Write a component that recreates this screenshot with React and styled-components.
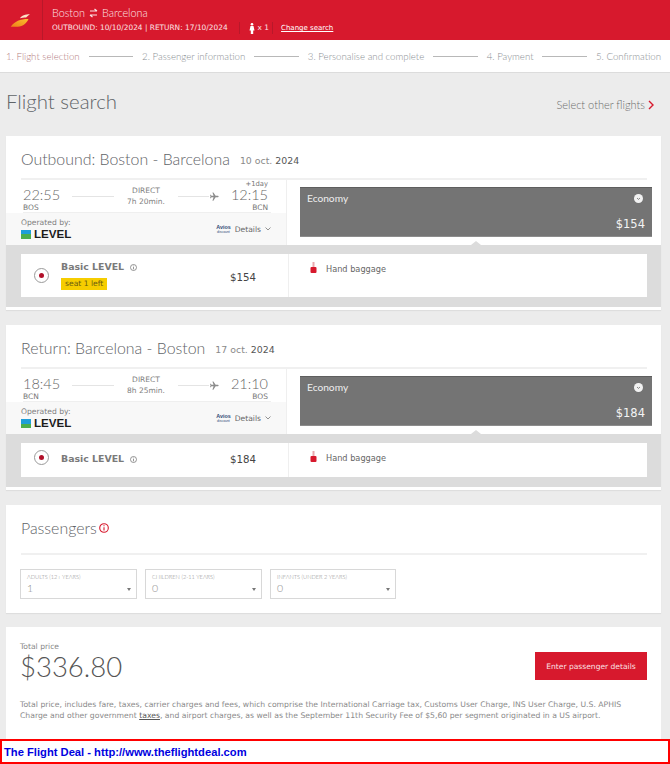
import React from "react";
import styled, { createGlobalStyle } from "styled-components";

const Global = createGlobalStyle`
  html, body { margin: 0; padding: 0; background: #ececec; }
  body { font-family: "DejaVu Sans", sans-serif; color: #555; height: 764px; overflow: hidden; }
  * { box-sizing: border-box; }
`;

const Page = styled.div`
  width: 670px;
  height: 764px;
  display: flex;
  flex-direction: column;
  overflow: hidden;
  position: relative;
`;

const Header = styled.header`
  height: 40px;
  flex: none;
  background: #d7192d;
  display: flex;
  color: #fbe3e5;
`;
const LogoCell = styled.div`
  width: 43px;
  border-right: 1px solid #b9182a;
  display: flex;
  align-items: center;
  padding-left: 10px;
`;
const Trip = styled.div`
  padding: 6px 0 0 9px;
  display: flex;
  flex-direction: column;
  gap: 2px;
`;
const Route = styled.div`
  font: 300 10.8px/14px Lato, sans-serif;
  display: flex;
  align-items: center;
  gap: 4px;
`;
const TripMeta = styled.div`
  font-size: 7.4px;
  line-height: 12px;
  display: flex;
  align-items: center;
  white-space: nowrap;
`;
const MetaCell = styled.span`
  display: inline-flex;
  align-items: center;
  gap: 3px;
  height: 12px;
  margin-left: ${(p) => p.$ml}px;
  padding-left: ${(p) => p.$pl}px;
  border-left: 1px solid #b9182a;
`;
const ChangeLink = styled.a`
  color: #fff;
  font-size: 7px;
  text-decoration: underline;
`;

const Stepper = styled.nav`
  height: 33px;
  flex: none;
  background: #fff;
  border-bottom: 1px solid #dcdcdc;
  display: flex;
  align-items: center;
  padding: 0 9px 0 6px;
  gap: 9px;
  font: 300 9.7px Lato, sans-serif;
  color: #8b8f94;
  white-space: nowrap;
`;
const Step = styled.span`
  color: ${(p) => (p.$active ? "#b5807f" : "#8b8f94")};
`;
const StepLine = styled.span`
  flex: 1;
  height: 1px;
  background: #b8b8b8;
`;

const Content = styled.main`
  flex: 1;
  min-height: 0;
  padding: 0 9px 0 6px;
  display: flex;
  flex-direction: column;
`;
const TitleRow = styled.div`
  height: 63px;
  flex: none;
  display: flex;
  justify-content: space-between;
  align-items: center;
  padding-bottom: 8px;
`;
const PageTitle = styled.h1`
  margin: 0;
  font: 300 20.4px Lato, sans-serif;
  color: #5f6468;
`;
const OtherFlights = styled.a`
  font: 300 11px Lato, sans-serif;
  color: #6d6d6d;
  display: flex;
  align-items: center;
  gap: 3px;
  margin-top: 8px;
  margin-right: 7px;
`;
const Card = styled.section`
  background: #fff;
  flex: none;
  margin-bottom: ${(p) => p.$mb || 15}px;
  padding-bottom: ${(p) => p.$pb || 0}px;
  box-shadow: 0 1px 1px rgba(0, 0, 0, 0.06);
`;
const CardHead = styled.div`
  margin: 0 14px 0 15px;
  height: ${(p) => p.$h || 44}px;
  border-bottom: 2px solid #f0f0f0;
  display: flex;
  align-items: center;
  gap: 10px;
  padding: ${(p) => p.$pad || "3px 0 0"};
`;
const CardTitle = styled.h2`
  margin: 0;
  font: 300 15.9px Lato, sans-serif;
  color: #5f6468;
  white-space: nowrap;
`;
const DateText = styled.span`
  font-size: 9.4px;
  color: #8a8a8a;
  margin-top: 3px;
  b { font-weight: 400; color: #555; }
`;
const FlightBody = styled.div`
  display: grid;
  grid-template-columns: 281px 1fr;
  height: 65px;
`;
const FlightInfo = styled.div`
  border-right: 1px solid #efefef;
  display: flex;
  flex-direction: column;
`;
const Times = styled.div`
  height: 33px;
  margin: 0 15px 0 17px;
  padding-right: 3px;
  display: grid;
  grid-template-columns: 49px 42px 64px 41px 1fr;
  align-items: center;
  border-bottom: 1px solid #efefef;
`;
const TimeBlock = styled.div`
  text-align: ${(p) => (p.$right ? "right" : "left")};
  position: relative;
  font: 300 14.5px/14px Lato, sans-serif;
  color: #666;
  margin-top: 6px;
  small {
    display: block;
    margin-top: 2px;
    font: 400 7.5px/7px "DejaVu Sans", sans-serif;
    color: #777;
  }
`;
const PlusDay = styled.span`
  position: absolute;
  right: 0;
  top: -8px;
  font: 400 6.800px/8px "DejaVu Sans", sans-serif;
  color: #777;
`;
const Rule = styled.span`
  height: 1px;
  background: #e4e4e4;
`;
const TailRule = styled(Rule)`
  flex: 1;
`;
const Direct = styled.div`
  text-align: center;
  font-size: 7.5px;
  line-height: 11px;
  color: #808080;
  white-space: nowrap;
`;
const PlaneSlot = styled.div`
  display: flex;
  align-items: center;
  gap: 1px;
`;
const Operated = styled.div`
  flex: 1;
  background: #f8f8f8;
  display: flex;
  justify-content: space-between;
  padding: 5px 15px 0 15px;
`;
const OpLabel = styled.div`
  font-size: 7.6px;
  line-height: 9px;
  color: #808080;
`;
const LevelMark = styled.div`
  display: flex;
  align-items: center;
  gap: 3px;
  margin-top: 1px;
  font: 700 11.600px/12px "Liberation Sans", sans-serif;
  color: #1c1c1c;
`;
const LevelIcon = styled.span`
  width: 10px;
  height: 9px;
  background: linear-gradient(#1e9ed8 50%, #4cae4c 50%);
`;
const DetailsWrap = styled.div`
  display: flex;
  align-items: center;
  gap: 4px;
  font-size: 7.6px;
  color: #666;
  margin-top: 4px;
  height: 14px;
`;
const Avios = styled.span`
  font: 700 5.400px/5px "Liberation Sans", sans-serif;
  color: #2f4a75;
  text-align: center;
  small { display: block; font-size: 3.4px; line-height: 4px; font-weight: 400; }
`;
const FareSide = styled.div`
  padding: 7px 9px 0 13px;
  position: relative;
`;
const FareBox = styled.div`
  height: 50px;
  background: #747474;
  border-top: 1px solid #5e5e5e;
  border-bottom: 1px solid #8c8c8c;
  color: #fff;
  padding: 4px 7px 5px;
  display: flex;
  flex-direction: column;
  justify-content: space-between;
`;
const FareTop = styled.div`
  display: flex;
  justify-content: space-between;
  align-items: center;
  padding-right: 2px;
  font: 400 10.2px Lato, sans-serif;
  color: #eee;
`;
const FarePrice = styled.div`
  text-align: right;
  font-size: 11.500px;
  line-height: 13px;
  color: #f3f3f3;
`;
const Notch = styled.span`
  position: absolute;
  left: 184px;
  bottom: 0;
  width: 0;
  height: 0;
  border: 5px solid transparent;
  border-top: 0;
  border-bottom: 4px solid #dcdcdc;
`;
const OptionsPanel = styled.div`
  background: #dcdcdc;
  padding: 9px 14px 10px 15px;
`;
const OptionRow = styled.div`
  background: #fff;
  display: grid;
  grid-template-columns: 268px 1fr;
  height: ${(p) => p.$h}px;
`;
const OptionLeft = styled.div`
  border-right: 1px solid #efefef;
  position: relative;
  display: flex;
  padding: ${(p) => (p.$compact ? "7px 0 0 13px" : "9px 0 0 13px")};
`;
const Radio = styled.span`
  width: 15px;
  height: 15px;
  flex: none;
  border: 1px solid #9a9a9a;
  border-radius: 50%;
  display: flex;
  align-items: center;
  justify-content: center;
  margin-top: ${(p) => (p.$compact ? "0" : "5px")};
  &::after {
    content: "";
    width: 5px;
    height: 5px;
    border-radius: 50%;
    background: #b1102a;
  }
`;
const OptionName = styled.div`
  margin-left: 12px;
  margin-top: ${(p) => (p.$compact ? "3px" : "-2px")};
  display: flex;
  flex-direction: column;
  align-items: flex-start;
  gap: 5px;
`;
const OptionTitle = styled.div`
  font-size: 9.4px;
  font-weight: 700;
  line-height: 12px;
  color: #7a7a7a;
  display: flex;
  align-items: center;
  gap: 6px;
`;
const SeatTag = styled.span`
  background: #f6cd00;
  color: #6b5b10;
  font-size: 7.6px;
  line-height: 12px;
  padding: 0 4px;
`;
const OptionPrice = styled.span`
  position: absolute;
  left: 209px;
  top: ${(p) => p.$top}px;
  font-size: 10.2px;
  line-height: 12px;
  color: #444;
`;
const Baggage = styled.div`
  display: flex;
  align-items: flex-start;
  gap: 9px;
  padding: 8px 0 0 21px;
  font-size: 8.2px;
  line-height: 14px;
  color: #666;
`;
const Selects = styled.div`
  display: flex;
  gap: 8px;
  padding: 14px 14px;
`;
const SelectBox = styled.div`
  width: ${(p) => p.$w || 117}px;
  height: 30px;
  border: 1px solid #d8d8d8;
  padding: 3px 6px 0;
  position: relative;
  label {
    display: block;
    font: 300 5.700px/8px Lato, sans-serif;
    color: #8a8a8a;
    white-space: nowrap;
  }
  span {
    display: block;
    margin-top: 1px;
    font: 300 10.5px/13px Lato, sans-serif;
    color: #888;
  }
  &::after {
    content: "";
    position: absolute;
    right: 5px;
    top: 18px;
    border: 2.5px solid transparent;
    border-top: 3px solid #777;
  }
`;
const PassTitle = styled(CardTitle)`
  display: flex;
  align-items: center;
  gap: 2px;
`;
const TotalCard = styled.section`
  background: #fff;
  flex: 1;
  padding: 15px 14px 0;
`;
const TotalTop = styled.div`
  display: flex;
  justify-content: space-between;
  align-items: flex-start;
`;
const TotalLabel = styled.div`
  font-size: 7.6px;
  line-height: 10px;
  color: #888;
`;
const TotalAmount = styled.div`
  font: 300 27.5px/30px Lato, sans-serif;
  color: #555;
`;
const PayButton = styled.button`
  width: 112px;
  height: 28px;
  margin-top: 10px;
  border: 0;
  background: #d7192d;
  color: #fbe3e5;
  font: 400 7.550px "DejaVu Sans", sans-serif;
  padding: 0;
`;
const Fine = styled.p`
  margin: 17px 0 0;
  font-size: 7.7px;
  line-height: 11px;
  color: #8a8a8a;
  white-space: nowrap;
  u { color: #555; }
`;
const Banner = styled.footer`
  height: 25px;
  flex: none;
  background: #fff;
  border: 2px solid #f00;
  padding-left: 2px;
  display: flex;
  align-items: center;
  font: 700 11.200px "Liberation Sans", sans-serif;
  color: #0000e0;
`;

const Logo = () => (
  <svg width="20" height="15" viewBox="0 0 26 18">
    <defs>
      <linearGradient id="wing" x1="0" y1="1" x2="1" y2="0">
        <stop offset="0" stopColor="#ee7f1a" />
        <stop offset="1" stopColor="#fbc02d" />
      </linearGradient>
    </defs>
    <path d="M1 17C6 10 13 7 24 7C22 12 17 17 10 17Z" fill="url(#wing)" />
    <path d="M13 6C15 3 20 1 26 1C24 2.500 22 4 21 5C18 5 15 5.500 13 6Z" fill="#fbe3c8" />
  </svg>
);
const Swap = () => (
  <svg width="9" height="10" viewBox="0 0 9 10" fill="none" stroke="#fbe3e5" strokeWidth="1.2">
    <path d="M1 3H8M5.500 1 8 3" />
    <path d="M8 7H1M3.500 9 1 7" />
  </svg>
);
const Person = ({ color = "#fff" }) => (
  <svg width="6" height="11" viewBox="0 0 6 11" fill={color}>
    <circle cx="3" cy="1.300" r="1.300" />
    <path d="M1.500 3H4.500L5.500 7.500H4.200V11H1.800V7.500H.5Z" />
  </svg>
);
const Chevron = () => (
  <svg width="6" height="10" viewBox="0 0 6 10" fill="none" stroke="#d7192d" strokeWidth="1.4">
    <path d="M1 1 5 5 1 9" />
  </svg>
);
const Plane = () => (
  <svg width="9" height="9" viewBox="0 0 24 24" fill="#8c8c8c">
    <path d="M23 12c0-1.200-1-2-2-2h-6L9 1H6.500l3 9H4L2 7.500H0L1.500 12 0 16.500h2L4 14h5.500l-3 9H9l6-9h6c1 0 2-.8 2-2Z" />
  </svg>
);
const Info = ({ color = "#777", size = 7 }) => (
  <svg width={size} height={size} viewBox="0 0 10 10" fill="none" stroke={color} strokeWidth="1.100">
    <circle cx="5" cy="5" r="4.300" />
    <path d="M5 4.200V7.600M5 2.300V3.300" />
  </svg>
);
const Check = () => (
  <svg width="9" height="9" viewBox="0 0 10 10">
    <circle cx="5" cy="5" r="5" fill="#f2f2f2" />
    <path d="M3.400 4.500 5 6 6.600 4.500" fill="none" stroke="#747474" strokeWidth="1" />
  </svg>
);
const SmallDown = () => (
  <svg width="6" height="4" viewBox="0 0 6 4" fill="none" stroke="#777" strokeWidth=".8">
    <path d="M.5.500 3 3 5.500.500" />
  </svg>
);
const Bag = () => (
  <svg width="7" height="12" viewBox="0 0 7 12">
    <rect x="2.500" y="0" width="2" height="5" fill="#e9a9ae" />
    <rect x=".5" y="5" width="6" height="6" rx="1" fill="#d7192d" />
  </svg>
);

const Flight = ({ title, date, year, dep, depCode, arr, arrCode, dur, plus, price, seat }) => (
  <Card $pb={3}>
    <CardHead>
      <CardTitle>{title}</CardTitle>
      <DateText>
        {date} <b>{year}</b>
      </DateText>
    </CardHead>
    <FlightBody>
      <FlightInfo>
        <Times>
          <TimeBlock>
            {dep}
            <small>{depCode}</small>
          </TimeBlock>
          <Rule />
          <Direct>
            DIRECT
            <br />
            {dur}
          </Direct>
          <PlaneSlot>
            <TailRule />
            <Plane />
          </PlaneSlot>
          <TimeBlock $right>
            {plus && <PlusDay>+1day</PlusDay>}
            {arr}
            <small>{arrCode}</small>
          </TimeBlock>
        </Times>
        <Operated>
          <div>
            <OpLabel>Operated by:</OpLabel>
            <LevelMark>
              <LevelIcon />
              LEVEL
            </LevelMark>
          </div>
          <DetailsWrap>
            <Avios>
              Avios
              <small>discount</small>
            </Avios>
            Details <SmallDown />
          </DetailsWrap>
        </Operated>
      </FlightInfo>
      <FareSide>
        <FareBox>
          <FareTop>
            Economy <Check />
          </FareTop>
          <FarePrice>${price}</FarePrice>
        </FareBox>
        <Notch />
      </FareSide>
    </FlightBody>
    <OptionsPanel>
      <OptionRow $h={seat ? 43 : 34}>
        <OptionLeft $compact={!seat}>
          <Radio $compact={!seat} />
          <OptionName $compact={!seat}>
            <OptionTitle>
              Basic LEVEL <Info />
            </OptionTitle>
            {seat && <SeatTag>seat 1 left</SeatTag>}
          </OptionName>
          <OptionPrice $top={seat ? 18 : 11}>${price}</OptionPrice>
        </OptionLeft>
        <Baggage>
          <Bag /> Hand baggage
        </Baggage>
      </OptionRow>
    </OptionsPanel>
  </Card>
);

export default function App() {
  return (
    <Page>
      <Global />
      <Header>
        <LogoCell>
          <Logo />
        </LogoCell>
        <Trip>
          <Route>
            Boston <Swap /> Barcelona
          </Route>
          <TripMeta>
            OUTBOUND: 10/10/2024 | RETURN: 17/10/2024
            <MetaCell $ml={11} $pl={9}>
              <Person /> x 1
            </MetaCell>
            <MetaCell $ml={3} $pl={8}>
              <ChangeLink>Change search</ChangeLink>
            </MetaCell>
          </TripMeta>
        </Trip>
      </Header>
      <Stepper>
        <Step $active>1. Flight selection</Step>
        <StepLine />
        <Step>2. Passenger information</Step>
        <StepLine />
        <Step>3. Personalise and complete</Step>
        <StepLine />
        <Step>4. Payment</Step>
        <StepLine />
        <Step>5. Confirmation</Step>
      </Stepper>
      <Content>
        <TitleRow>
          <PageTitle>Flight search</PageTitle>
          <OtherFlights>
            Select other flights <Chevron />
          </OtherFlights>
        </TitleRow>
        <Flight
          title="Outbound: Boston - Barcelona"
          date="10 oct."
          year="2024"
          dep="22:55"
          depCode="BOS"
          arr="12:15"
          arrCode="BCN"
          dur="7h 20min."
          plus
          price="154"
          seat
        />
        <Flight
          title="Return: Barcelona - Boston"
          date="17 oct."
          year="2024"
          dep="18:45"
          depCode="BCN"
          arr="21:10"
          arrCode="BOS"
          dur="8h 25min."
          price="184"
        />
        <Card $mb={14}>
          <CardHead $h={50} $pad="0 0 3px">
            <PassTitle>
              Passengers <Info color="#d7192d" size={10} />
            </PassTitle>
          </CardHead>
          <Selects>
            <SelectBox>
              <label>ADULTS (12+ YEARS)</label>
              <span>1</span>
            </SelectBox>
            <SelectBox>
              <label>CHILDREN (2-11 YEARS)</label>
              <span>0</span>
            </SelectBox>
            <SelectBox $w={126}>
              <label>INFANTS (UNDER 2 YEARS)</label>
              <span>0</span>
            </SelectBox>
          </Selects>
        </Card>
        <TotalCard>
          <TotalTop>
            <div>
              <TotalLabel>Total price</TotalLabel>
              <TotalAmount>$336.80</TotalAmount>
            </div>
            <PayButton>Enter passenger details</PayButton>
          </TotalTop>
          <Fine>
            Total price, includes fare, taxes, carrier charges and fees, which comprise the International Carriage tax, Customs User Charge, INS User Charge, U.S. APHIS
            <br />
            Charge and other government <u>taxes</u>, and airport charges, as well as the September 11th Security Fee of $5,60 per segment originated in a US airport.
          </Fine>
        </TotalCard>
      </Content>
      <Banner>The Flight Deal - http://www.theflightdeal.com</Banner>
    </Page>
  );
}
